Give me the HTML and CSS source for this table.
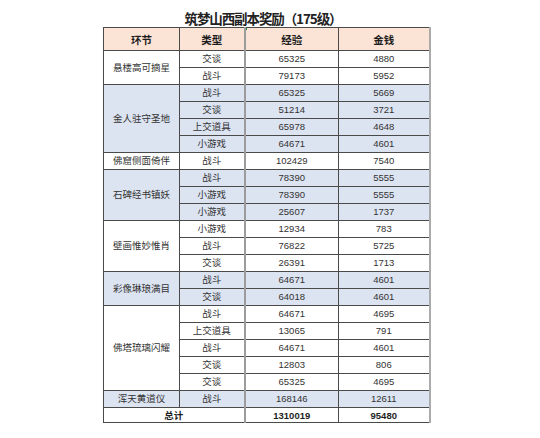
FILE: index.html
```html
<!DOCTYPE html>
<html lang="zh">
<head>
<meta charset="utf-8">
<title>筑梦山西副本奖励</title>
<link rel="stylesheet" href="styles.css">
</head>
<body>
<div class="sheet">
  <h1 class="title">筑梦山西副本奖励（175级）</h1>
  <table class="grid">
    <colgroup>
      <col class="c1"><col class="c2"><col class="c3"><col class="c4">
    </colgroup>
    <thead>
      <tr class="head">
        <th>环节</th><th class="sep">类型</th><th class="mark-cell">经验<span class="mark"></span></th><th class="last">金钱</th>
      </tr>
    </thead>
    <tbody>
      <tr><td rowspan="2">悬楼高可摘星</td><td class="sep">交谈</td><td>65325</td><td class="last">4880</td></tr>
      <tr><td class="sep">战斗</td><td>79173</td><td class="last">5952</td></tr>

      <tr class="blue"><td rowspan="4">金人驻守圣地</td><td class="sep">战斗</td><td>65325</td><td class="last">5669</td></tr>
      <tr class="blue"><td class="sep">交谈</td><td>51214</td><td class="last">3721</td></tr>
      <tr class="blue"><td class="sep">上交道具</td><td>65978</td><td class="last">4648</td></tr>
      <tr class="blue"><td class="sep">小游戏</td><td>64671</td><td class="last">4601</td></tr>

      <tr><td>佛窟侧面倚伴</td><td class="sep">战斗</td><td>102429</td><td class="last">7540</td></tr>

      <tr class="blue"><td rowspan="3">石碑经书镇妖</td><td class="sep">战斗</td><td>78390</td><td class="last">5555</td></tr>
      <tr class="blue"><td class="sep">小游戏</td><td>78390</td><td class="last">5555</td></tr>
      <tr class="blue"><td class="sep">小游戏</td><td>25607</td><td class="last">1737</td></tr>

      <tr><td rowspan="3">壁画惟妙惟肖</td><td class="sep">小游戏</td><td>12934</td><td class="last">783</td></tr>
      <tr><td class="sep">战斗</td><td>76822</td><td class="last">5725</td></tr>
      <tr><td class="sep">交谈</td><td>26391</td><td class="last">1713</td></tr>

      <tr class="blue"><td rowspan="2">彩像琳琅满目</td><td class="sep">战斗</td><td>64671</td><td class="last">4601</td></tr>
      <tr class="blue"><td class="sep">交谈</td><td>64018</td><td class="last">4601</td></tr>

      <tr><td rowspan="5">佛塔琉璃闪耀</td><td class="sep">战斗</td><td>64671</td><td class="last">4695</td></tr>
      <tr><td class="sep">上交道具</td><td>13065</td><td class="last">791</td></tr>
      <tr><td class="sep">战斗</td><td>64671</td><td class="last">4601</td></tr>
      <tr><td class="sep">交谈</td><td>12803</td><td class="last">806</td></tr>
      <tr><td class="sep">交谈</td><td>65325</td><td class="last">4695</td></tr>

      <tr class="blue"><td>浑天黄道仪</td><td class="sep">战斗</td><td>168146</td><td class="last">12611</td></tr>

      <tr class="total"><td colspan="2" class="sep">总计</td><td>1310019</td><td class="last">95480</td></tr>
    </tbody>
  </table>
</div>
</body>
</html>
```

FILE: styles.css
```css
html, body {
  margin: 0;
  padding: 0;
  background: #ffffff;
}

body {
  font-family: "Liberation Sans", "Noto Sans CJK SC", sans-serif;
  color: #333333;
}

.sheet {
  margin-left: 103px;
  width: 326px;
  padding-top: 10px;
}

.title {
  margin: 0 0 1px 0;
  height: 16px;
  line-height: 16px;
  font-family: "Noto Sans CJK SC", sans-serif;
  font-size: 13.5px;
  font-weight: 700;
  letter-spacing: -1.1px;
  color: #222222;
  text-align: center;
  padding-right: 6px;
}

.grid {
  border-collapse: collapse;
  table-layout: fixed;
  width: 326px;
  font-size: 9.5px;
}

.c1 { width: 76px; }
.c2 { width: 65px; }
.c3 { width: 94px; }
.c4 { width: 91px; }

.grid th,
.grid td {
  border: 1px solid #4a4a4a;
  padding: 0;
  text-align: center;
  vertical-align: middle;
  white-space: nowrap;
  overflow: hidden;
}

.grid td {
  height: 16px;
  line-height: 14px;
}

.grid td.sep,
.grid th.sep {
  border-right: 2px solid #9c9c9c;
}

.grid td.last,
.grid th.last {
  border-right: 2px solid #ababab;
}

.head th {
  height: 22px;
  background: #fbe3d5;
  font-family: "Noto Sans CJK SC", sans-serif;
  font-size: 10.5px;
  font-weight: 700;
  color: #1e1e1e;
}

.mark-cell {
  position: relative;
}

.mark {
  position: absolute;
  left: -2px;
  top: -1px;
  width: 3px;
  height: 3px;
  background: #2e8b3e;
}

.blue td {
  background: #dce3f1;
}

.total td {
  height: 14px;
  line-height: 13px;
  font-weight: 700;
  color: #1e1e1e;
}
```
